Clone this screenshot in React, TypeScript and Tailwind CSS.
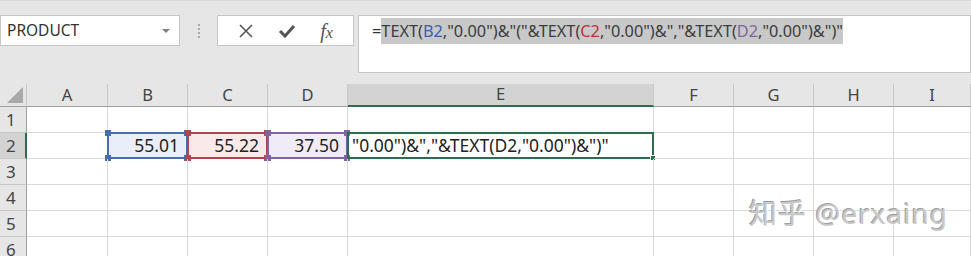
import React from 'react'

const cols = ['A', 'B', 'C', 'D', 'E', 'F', 'G', 'H', 'I']
const widths = ['81px', '80px', '80px', '80px', '306px', '80px', '80px', '80px', '1fr']
const rows = [1, 2, 3, 4, 5, 6]

function Handle({ pos, color }: { pos: string; color: string }) {
  return <span className={`absolute w-[6px] h-[6px] ${pos} ${color}`} />
}

function RefBox({ border, fill }: { border: string; fill: string }) {
  return (
    <div className={`absolute -left-px -top-px -right-px -bottom-px border-2 ${border}`}>
      <Handle pos="-left-[4px] -top-[4px]" color={fill} />
      <Handle pos="-right-[4px] -top-[4px]" color={fill} />
      <Handle pos="-left-[4px] -bottom-[4px]" color={fill} />
      <Handle pos="-right-[4px] -bottom-[4px]" color={fill} />
    </div>
  )
}

function Cell({ col, row }: { col: string; row: number }) {
  const base = 'relative border-r border-b border-[#dadada] h-[26px]'
  if (row === 2 && col === 'B')
    return (
      <div className={`${base} bg-[#e9eef8] flex items-center justify-end pr-2`}>
        <span className="relative z-10">55.01</span>
        <RefBox border="border-[#4a6db0]" fill="bg-[#4a6db0]" />
      </div>
    )
  if (row === 2 && col === 'C')
    return (
      <div className={`${base} bg-[#f9e9e9] flex items-center justify-end pr-2`}>
        <span className="relative z-10">55.22</span>
        <RefBox border="border-[#b0444f]" fill="bg-[#b0444f]" />
      </div>
    )
  if (row === 2 && col === 'D')
    return (
      <div className={`${base} bg-[#f0ecf6] flex items-center justify-end pr-2`}>
        <span className="relative z-10">37.50</span>
        <RefBox border="border-[#8064a2]" fill="bg-[#8064a2]" />
      </div>
    )
  if (row === 2 && col === 'E')
    return (
      <div className={`${base} flex items-center pl-1 overflow-visible`}>
        <span className="whitespace-nowrap">"0.00")&amp;","&amp;TEXT(D2,"0.00")&amp;")"</span>
        <div className="absolute -left-px -top-px -right-px -bottom-px border-2 border-[#2b6e4b]">
          <span className="absolute -right-[4px] -bottom-[4px] w-[6px] h-[6px] bg-[#2b6e4b] border border-white" />
        </div>
      </div>
    )
  return <div className={base} />
}

export default function App() {
  return (
    <div
      className="w-[971px] h-[256px] overflow-hidden bg-white text-[#222] relative"
      style={{ fontFamily: '"Noto Sans", "Noto Sans CJK SC", sans-serif' }}
    >
      {/* 编辑栏 */}
      <div className="h-[84px] bg-[#e6e6e6] flex items-start pt-[14px] border-t border-[#d8d8d8]">
        <div className="w-[180px] h-[31px] bg-white border border-[#c6c6c6] flex items-center justify-between pl-[6px] pr-[9px] text-[15.5px] text-[#333]">
          <span>PRODUCT</span>
          <span className="w-0 h-0 border-l-[4px] border-r-[4px] border-t-[4px] border-l-transparent border-r-transparent border-t-[#808080]" />
        </div>
        <div className="w-[37px] flex flex-col items-center gap-[2px] pt-[9px]">
          <span className="w-[2px] h-[2px] bg-[#a8a8a8]" />
          <span className="w-[2px] h-[2px] bg-[#a8a8a8]" />
          <span className="w-[2px] h-[2px] bg-[#a8a8a8]" />
          <span className="w-[2px] h-[2px] bg-[#a8a8a8]" />
        </div>
        <div className="w-[137px] h-[31px] bg-white border border-[#c6c6c6] flex items-center justify-around px-2">
          <svg width="16" height="16" viewBox="0 0 16 16">
            <path d="M2 2 L14 14 M14 2 L2 14" stroke="#555" strokeWidth="1.6" />
          </svg>
          <svg width="18" height="16" viewBox="0 0 18 16">
            <path d="M2 8 L7 13 L16 3" stroke="#555" strokeWidth="3" fill="none" />
          </svg>
          <span
            className="text-[20px] italic text-[#555] leading-none"
            style={{ fontFamily: '"Liberation Serif", serif' }}
          >
            f<span className="text-[16px]">x</span>
          </span>
        </div>
        <div className="ml-[4px] flex-1 h-[58px] bg-white border border-[#c6c6c6] pl-[13px] pt-[2px] text-[16.3px] text-[#333]">
          <div className="flex h-[26px] items-center whitespace-nowrap">
            <span>=</span>
            <span className="bg-[#c8c8c8] h-[26px] flex items-center text-[#3c3c3c]">
              TEXT(<span className="text-[#3a5fb0]">B2</span>,"0.00")&amp;"("&amp;TEXT(
              <span className="text-[#c0303a]">C2</span>,"0.00")&amp;","&amp;TEXT(
              <span className="text-[#8064a2]">D2</span>,"0.00")&amp;")"
            </span>
          </div>
        </div>
      </div>

      {/* 表格 */}
      <div
        className="grid text-[17.5px]"
        style={{ gridTemplateColumns: `27px ${widths.join(' ')}` }}
      >
        <div className="h-[23px] bg-[#e6e6e6] border-r border-b border-r-[#c8c8c8] border-b-[#9f9f9f] flex items-end justify-end pr-[3px] pb-[3px]">
          <div className="w-[16px] h-[16px] shrink-0 bg-[#a9a9a9] [clip-path:polygon(100%_0,100%_100%,0_100%)]" />
        </div>
        {cols.map((c) => (
          <div
            key={c}
            className={`h-[23px] flex items-center justify-center text-[16.5px] text-[#444] border-r border-[#c8c8c8] ${
              c === 'E'
                ? 'bg-[#d3d3d3] border-b-2 border-b-[#2b6e4b]'
                : 'bg-[#e6e6e6] border-b border-b-[#9f9f9f]'
            }`}
          >
            {c}
          </div>
        ))}
        {rows.map((r) => (
          <React.Fragment key={r}>
            <div
              className={`h-[26px] flex items-center pl-[6px] text-[17px] text-[#444] border-b border-[#c8c8c8] ${
                r === 2
                  ? 'bg-[#d3d3d3] border-r-2 border-r-[#2b6e4b]'
                  : 'bg-[#e6e6e6] border-r border-r-[#9f9f9f]'
              }`}
            >
              {r}
            </div>
            {cols.map((c) => (
              <Cell key={c} col={c} row={r} />
            ))}
          </React.Fragment>
        ))}
      </div>

      {/* 水印 */}
      <div
        className="absolute left-[749px] top-[192px] text-[28px] text-[#c8c8c8] tracking-[1px] whitespace-nowrap"
        style={{ textShadow: '1px 1px 0 #ffffff, -1px -1px 0 #a0a0a0' }}
      >
        知乎 @erxaing
      </div>
    </div>
  )
}
